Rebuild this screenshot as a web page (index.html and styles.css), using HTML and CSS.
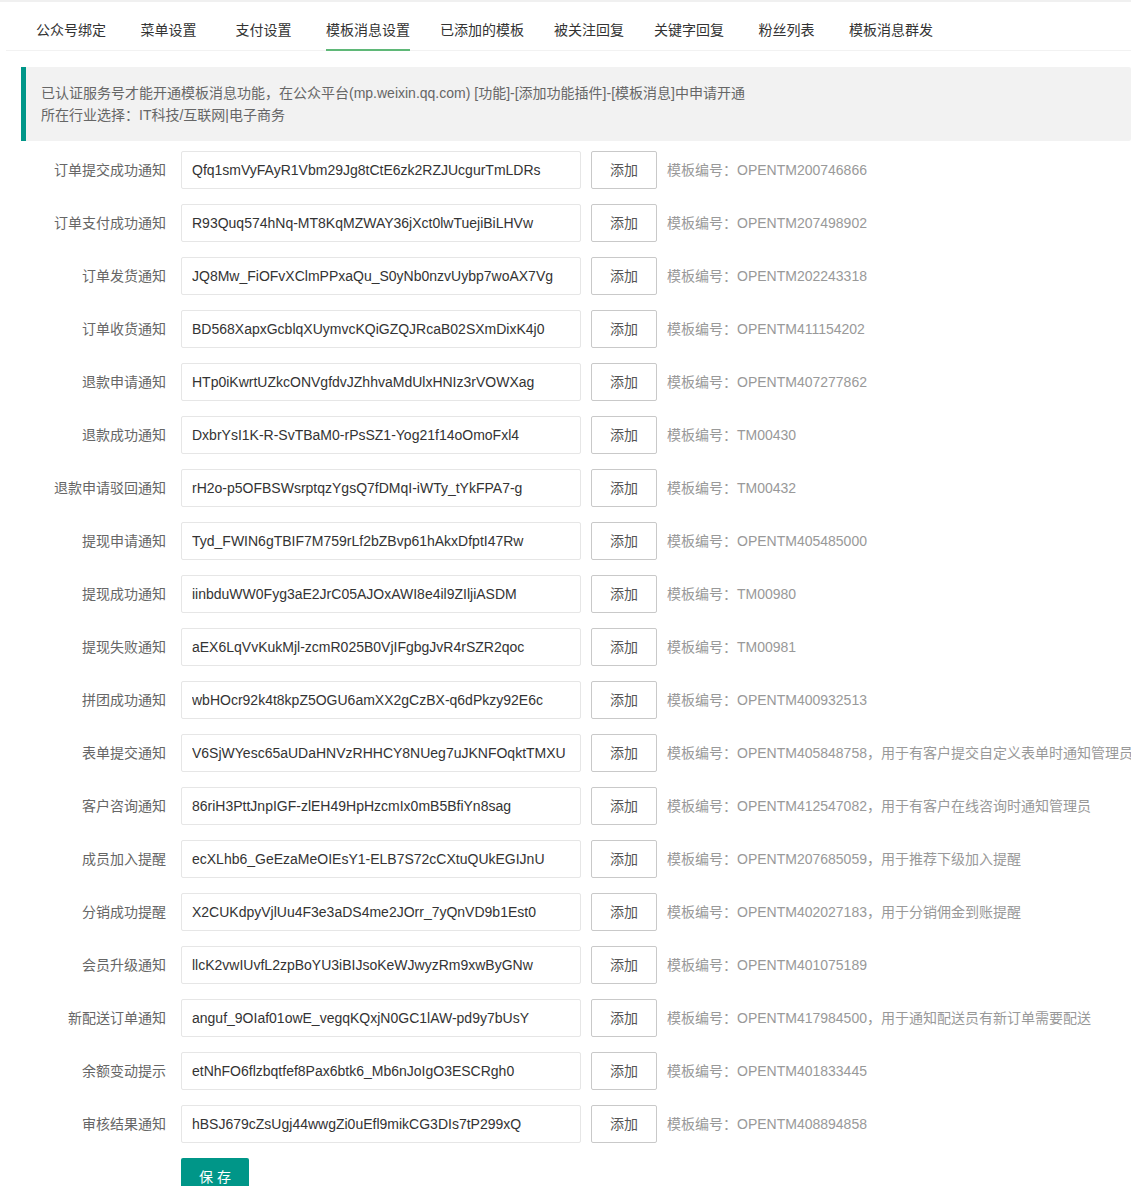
FILE: index.html
```html
<!doctype html>
<html>
<head>
<meta charset="utf-8">
<title>模板消息设置</title>
<link rel="stylesheet" href="styles.css">
</head>
<body>
<div class="topBar"></div>
<ul class="tabTitle">
	<li>公众号绑定</li>
	<li>菜单设置</li>
	<li>支付设置</li>
	<li class="tabThis"><span>模板消息设置</span></li>
	<li>已添加的模板</li>
	<li>被关注回复</li>
	<li>关键字回复</li>
	<li>粉丝列表</li>
	<li>模板消息群发</li>
</ul>
<div class="main">
	<blockquote class="quote">
		已认证服务号才能开通模板消息功能，在公众平台(mp.weixin.qq.com) [功能]-[添加功能插件]-[模板消息]中申请开通<br>
		所在行业选择：IT科技/互联网|电子商务
	</blockquote>
	<form class="form">
		<div class="formItem">
			<label class="formLabel">订单提交成功通知</label>
			<input class="input" type="text" value="Qfq1smVyFAyR1Vbm29Jg8tCtE6zk2RZJUcgurTmLDRs">
			<button type="button" class="btnPrimary">添加</button>
			<div class="aux">模板编号：OPENTM200746866</div>
		</div>
		<div class="formItem">
			<label class="formLabel">订单支付成功通知</label>
			<input class="input" type="text" value="R93Quq574hNq-MT8KqMZWAY36jXct0lwTuejiBiLHVw">
			<button type="button" class="btnPrimary">添加</button>
			<div class="aux">模板编号：OPENTM207498902</div>
		</div>
		<div class="formItem">
			<label class="formLabel">订单发货通知</label>
			<input class="input" type="text" value="JQ8Mw_FiOFvXClmPPxaQu_S0yNb0nzvUybp7woAX7Vg">
			<button type="button" class="btnPrimary">添加</button>
			<div class="aux">模板编号：OPENTM202243318</div>
		</div>
		<div class="formItem">
			<label class="formLabel">订单收货通知</label>
			<input class="input" type="text" value="BD568XapxGcblqXUymvcKQiGZQJRcaB02SXmDixK4j0">
			<button type="button" class="btnPrimary">添加</button>
			<div class="aux">模板编号：OPENTM411154202</div>
		</div>
		<div class="formItem">
			<label class="formLabel">退款申请通知</label>
			<input class="input" type="text" value="HTp0iKwrtUZkcONVgfdvJZhhvaMdUlxHNIz3rVOWXag">
			<button type="button" class="btnPrimary">添加</button>
			<div class="aux">模板编号：OPENTM407277862</div>
		</div>
		<div class="formItem">
			<label class="formLabel">退款成功通知</label>
			<input class="input" type="text" value="DxbrYsI1K-R-SvTBaM0-rPsSZ1-Yog21f14oOmoFxl4">
			<button type="button" class="btnPrimary">添加</button>
			<div class="aux">模板编号：TM00430</div>
		</div>
		<div class="formItem">
			<label class="formLabel">退款申请驳回通知</label>
			<input class="input" type="text" value="rH2o-p5OFBSWsrptqzYgsQ7fDMqI-iWTy_tYkFPA7-g">
			<button type="button" class="btnPrimary">添加</button>
			<div class="aux">模板编号：TM00432</div>
		</div>
		<div class="formItem">
			<label class="formLabel">提现申请通知</label>
			<input class="input" type="text" value="Tyd_FWIN6gTBIF7M759rLf2bZBvp61hAkxDfptI47Rw">
			<button type="button" class="btnPrimary">添加</button>
			<div class="aux">模板编号：OPENTM405485000</div>
		</div>
		<div class="formItem">
			<label class="formLabel">提现成功通知</label>
			<input class="input" type="text" value="iinbduWW0Fyg3aE2JrC05AJOxAWI8e4il9ZIljiASDM">
			<button type="button" class="btnPrimary">添加</button>
			<div class="aux">模板编号：TM00980</div>
		</div>
		<div class="formItem">
			<label class="formLabel">提现失败通知</label>
			<input class="input" type="text" value="aEX6LqVvKukMjl-zcmR025B0VjIFgbgJvR4rSZR2qoc">
			<button type="button" class="btnPrimary">添加</button>
			<div class="aux">模板编号：TM00981</div>
		</div>
		<div class="formItem">
			<label class="formLabel">拼团成功通知</label>
			<input class="input" type="text" value="wbHOcr92k4t8kpZ5OGU6amXX2gCzBX-q6dPkzy92E6c">
			<button type="button" class="btnPrimary">添加</button>
			<div class="aux">模板编号：OPENTM400932513</div>
		</div>
		<div class="formItem">
			<label class="formLabel">表单提交通知</label>
			<input class="input" type="text" value="V6SjWYesc65aUDaHNVzRHHCY8NUeg7uJKNFOqktTMXU">
			<button type="button" class="btnPrimary">添加</button>
			<div class="aux">模板编号：OPENTM405848758，用于有客户提交自定义表单时通知管理员</div>
		</div>
		<div class="formItem">
			<label class="formLabel">客户咨询通知</label>
			<input class="input" type="text" value="86riH3PttJnpIGF-zlEH49HpHzcmIx0mB5BfiYn8sag">
			<button type="button" class="btnPrimary">添加</button>
			<div class="aux">模板编号：OPENTM412547082，用于有客户在线咨询时通知管理员</div>
		</div>
		<div class="formItem">
			<label class="formLabel">成员加入提醒</label>
			<input class="input" type="text" value="ecXLhb6_GeEzaMeOIEsY1-ELB7S72cCXtuQUkEGIJnU">
			<button type="button" class="btnPrimary">添加</button>
			<div class="aux">模板编号：OPENTM207685059，用于推荐下级加入提醒</div>
		</div>
		<div class="formItem">
			<label class="formLabel">分销成功提醒</label>
			<input class="input" type="text" value="X2CUKdpyVjlUu4F3e3aDS4me2JOrr_7yQnVD9b1Est0">
			<button type="button" class="btnPrimary">添加</button>
			<div class="aux">模板编号：OPENTM402027183，用于分销佣金到账提醒</div>
		</div>
		<div class="formItem">
			<label class="formLabel">会员升级通知</label>
			<input class="input" type="text" value="llcK2vwIUvfL2zpBoYU3iBIJsoKeWJwyzRm9xwByGNw">
			<button type="button" class="btnPrimary">添加</button>
			<div class="aux">模板编号：OPENTM401075189</div>
		</div>
		<div class="formItem">
			<label class="formLabel">新配送订单通知</label>
			<input class="input" type="text" value="anguf_9OIaf01owE_vegqKQxjN0GC1lAW-pd9y7bUsY">
			<button type="button" class="btnPrimary">添加</button>
			<div class="aux">模板编号：OPENTM417984500，用于通知配送员有新订单需要配送</div>
		</div>
		<div class="formItem">
			<label class="formLabel">余额变动提示</label>
			<input class="input" type="text" value="etNhFO6flzbqtfef8Pax6btk6_Mb6nJoIgO3ESCRgh0">
			<button type="button" class="btnPrimary">添加</button>
			<div class="aux">模板编号：OPENTM401833445</div>
		</div>
		<div class="formItem">
			<label class="formLabel">审核结果通知</label>
			<input class="input" type="text" value="hBSJ679cZsUgj44wwgZi0uEfl9mikCG3DIs7tP299xQ">
			<button type="button" class="btnPrimary">添加</button>
			<div class="aux">模板编号：OPENTM408894858</div>
		</div>
		<div class="formItem">
			<div class="formBlock">
				<button type="button" class="btn">保 存</button>
			</div>
		</div>
	</form>
</div>
</body>
</html>
```
FILE: styles.css
```css
html,
body {
	margin: 0;
	overflow: hidden;
	background: #fff;
	font-family: "Liberation Sans", "Noto Sans CJK SC", sans-serif;
	font-size: 14px;
	color: #333;
}
ul {
	margin: 0;
	padding: 0;
	list-style: none;
}
.topBar {
	height: 2px;
	background: #f0f0f0;
}
.tabTitle {
	display: flex;
	height: 40px;
	margin: 8px 0 0 6px;
	padding-left: 15px;
	border-bottom: 1px solid #f2f2f2;
	white-space: nowrap;
}
.tabTitle li {
	position: relative;
	min-width: 65px;
	padding: 0 15px;
	line-height: 40px;
	text-align: center;
	color: #333;
}
.tabThis span {
	position: relative;
	display: inline-block;
}
.tabThis span:after {
	content: "";
	position: absolute;
	left: 0;
	right: 0;
	top: 39px;
	height: 2px;
	background: #5fb878;
}
.main {
	padding: 16px 0 0 21px;
}
.quote {
	margin: 0 0 10px 0;
	padding: 15px;
	line-height: 22px;
	border-left: 5px solid #009688;
	border-radius: 0 2px 2px 0;
	background: #f2f2f2;
	color: #666;
	white-space: nowrap;
}
.form {
	margin: 0;
}
.formItem {
	display: flex;
	align-items: flex-start;
	margin-bottom: 15px;
	white-space: nowrap;
}
.formItem > * {
	flex-shrink: 0;
}
.formLabel {
	box-sizing: border-box;
	width: 160px;
	padding: 9px 15px;
	line-height: 20px;
	text-align: right;
	color: #666;
}
.input {
	box-sizing: border-box;
	width: 400px;
	height: 38px;
	margin: 0;
	padding: 0 10px;
	border: 1px solid #e6e6e6;
	border-radius: 2px;
	background: #fff;
	font: inherit;
	color: #333;
	outline: none;
}
.btnPrimary {
	box-sizing: border-box;
	height: 38px;
	margin-left: 10px;
	padding: 0 18px;
	border: 1px solid #c9c9c9;
	border-radius: 2px;
	background: #fff;
	font: inherit;
	line-height: 36px;
	color: #555;
}
.aux {
	padding: 9px 0;
	margin-left: 10px;
	line-height: 20px;
	color: #999;
}
.formBlock {
	margin-left: 160px;
}
.btn {
	height: 38px;
	padding: 0 18px;
	border: none;
	border-radius: 2px;
	background: #009688;
	font: inherit;
	line-height: 38px;
	color: #fff;
}
```
